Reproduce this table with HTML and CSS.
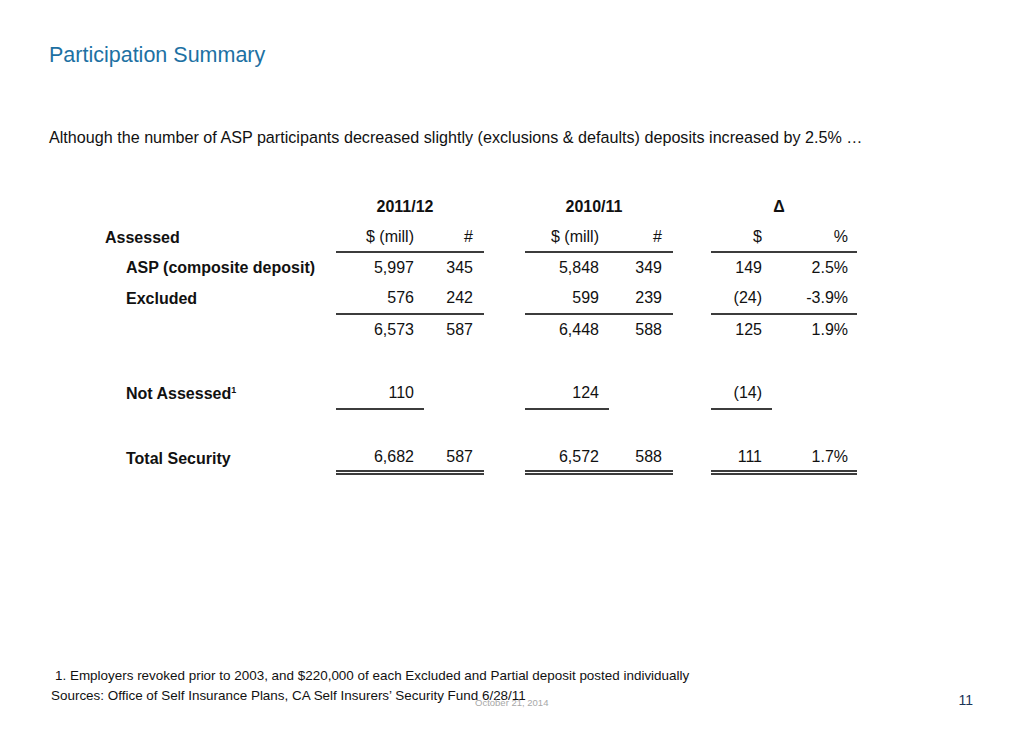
FILE: index.html
```html
<!DOCTYPE html>
<html lang="en">
<head>
<meta charset="utf-8">
<title>Participation Summary</title>
<link rel="stylesheet" href="styles.css">
</head>
<body>
<div class="slide">
  <h1 class="title">Participation Summary</h1>
  <p class="lead">Although the number of ASP participants decreased slightly (exclusions &amp; defaults) deposits increased by 2.5% …</p>

  <div class="summary">
    <!-- header row -->
    <div class="c lbl"></div>
    <div class="c grp g1">2011/12</div>
    <div class="c gap"></div>
    <div class="c grp g2">2010/11</div>
    <div class="c gap"></div>
    <div class="c grp g3">Δ</div>

    <!-- Assessed -->
    <div class="c lbl b">Assessed</div>
    <div class="c n1 ul">$ (mill)</div>
    <div class="c n2 ul">#</div>
    <div class="c gap"></div>
    <div class="c n1 ul">$ (mill)</div>
    <div class="c n2 ul">#</div>
    <div class="c gap"></div>
    <div class="c n1 ul">$</div>
    <div class="c n2 ul p">%</div>

    <!-- ASP -->
    <div class="c lbl b in">ASP (composite deposit)</div>
    <div class="c n1">5,997</div>
    <div class="c n2">345</div>
    <div class="c gap"></div>
    <div class="c n1">5,848</div>
    <div class="c n2">349</div>
    <div class="c gap"></div>
    <div class="c n1">149</div>
    <div class="c n2 p">2.5%</div>

    <!-- Excluded -->
    <div class="c lbl b in">Excluded</div>
    <div class="c n1 ul">576</div>
    <div class="c n2 ul">242</div>
    <div class="c gap"></div>
    <div class="c n1 ul">599</div>
    <div class="c n2 ul">239</div>
    <div class="c gap"></div>
    <div class="c n1 ul">(24)</div>
    <div class="c n2 ul p">-3.9%</div>

    <!-- subtotal -->
    <div class="c lbl"></div>
    <div class="c n1">6,573</div>
    <div class="c n2">587</div>
    <div class="c gap"></div>
    <div class="c n1">6,448</div>
    <div class="c n2">588</div>
    <div class="c gap"></div>
    <div class="c n1">125</div>
    <div class="c n2 p">1.9%</div>

    <div class="spacer"></div>

    <!-- Not Assessed -->
    <div class="c lbl b in"><span>Not Assessed<sup>1</sup></span></div>
    <div class="c n1 ul">110</div>
    <div class="c n2"></div>
    <div class="c gap"></div>
    <div class="c n1 ul">124</div>
    <div class="c n2"></div>
    <div class="c gap"></div>
    <div class="c n1 ul">(14)</div>
    <div class="c n2 p"></div>

    <div class="spacer"></div>

    <!-- Total Security -->
    <div class="c lbl b in">Total Security</div>
    <div class="c n1 dbl">6,682</div>
    <div class="c n2 dbl">587</div>
    <div class="c gap"></div>
    <div class="c n1 dbl">6,572</div>
    <div class="c n2 dbl">588</div>
    <div class="c gap"></div>
    <div class="c n1 dbl">111</div>
    <div class="c n2 dbl p">1.7%</div>
  </div>

  <div class="notes">
    <p class="note first">1. Employers revoked prior to 2003, and $220,000 of each Excluded and Partial deposit posted individually</p>
    <div class="note-row">
      <p class="note">Sources: Office of Self Insurance Plans, CA Self Insurers’ Security Fund 6/28/11</p>
      <span class="page-no">11</span>
    </div>
  </div>
  <span class="date">October 21, 2014</span>
</div>
</body>
</html>
```

FILE: styles.css
```css
* { box-sizing: border-box; }

html, body {
  margin: 0;
  padding: 0;
  background: #ffffff;
}

body {
  font-family: "Liberation Sans", Arial, Helvetica, sans-serif;
  color: #111111;
}

.slide {
  position: relative;
  width: 1024px;
  height: 731px;
  padding: 0 51px 0 49px;
  overflow: hidden;
}

.title {
  margin: 42px 0 0 0;
  font-size: 21.5px;
  line-height: 26px;
  font-weight: normal;
  color: #1d71a3;
}

.lead {
  margin: 59px 0 0 0;
  font-size: 16.15px;
  line-height: 20px;
}

.summary {
  margin: 45px 0 0 56px;
  display: grid;
  grid-template-columns: 231px 88px 60px 41px 84px 64px 38px 61px 85px;
  grid-template-rows: 30px 31px 30px 32px 30px 33px 32px 32px 33px;
  font-size: 16px;
}

.c {
  display: flex;
  align-items: center;
  line-height: 20px;
}

.lbl { justify-content: flex-start; }
.lbl.in { padding-left: 21px; }
.b { font-weight: bold; }

.grp {
  grid-column: span 2;
  justify-content: center;
  padding-right: 10px;
  font-weight: bold;
}

.n1 { justify-content: flex-end; padding-right: 10px; }
.n2 { justify-content: flex-end; padding-right: 11px; }
.n2.p { padding-right: 9px; }

.ul { border-bottom: 2px solid #3c3c3c; }
.dbl {
  border-bottom: 5px double #3c3c3c;
  padding-top: 2px;
}

.spacer { grid-column: 1 / -1; }

sup {
  font-size: 9px;
  line-height: 0;
  vertical-align: 6px;
}

.notes {
  margin-top: 191px;
  padding-left: 2px;
}

.note {
  margin: 0;
  font-size: 13.45px;
  line-height: 20px;
  color: #111111;
}

.note.first { padding-left: 4px; }

.note-row {
  display: flex;
  align-items: center;
}

.page-no {
  margin-left: auto;
  align-self: flex-end;
  font-size: 14px;
  line-height: 12px;
  color: #1b3557;
}

.date {
  position: absolute;
  left: 475px;
  top: 697px;
  font-size: 9.5px;
  line-height: 12px;
  color: #a8a8a8;
}
```
